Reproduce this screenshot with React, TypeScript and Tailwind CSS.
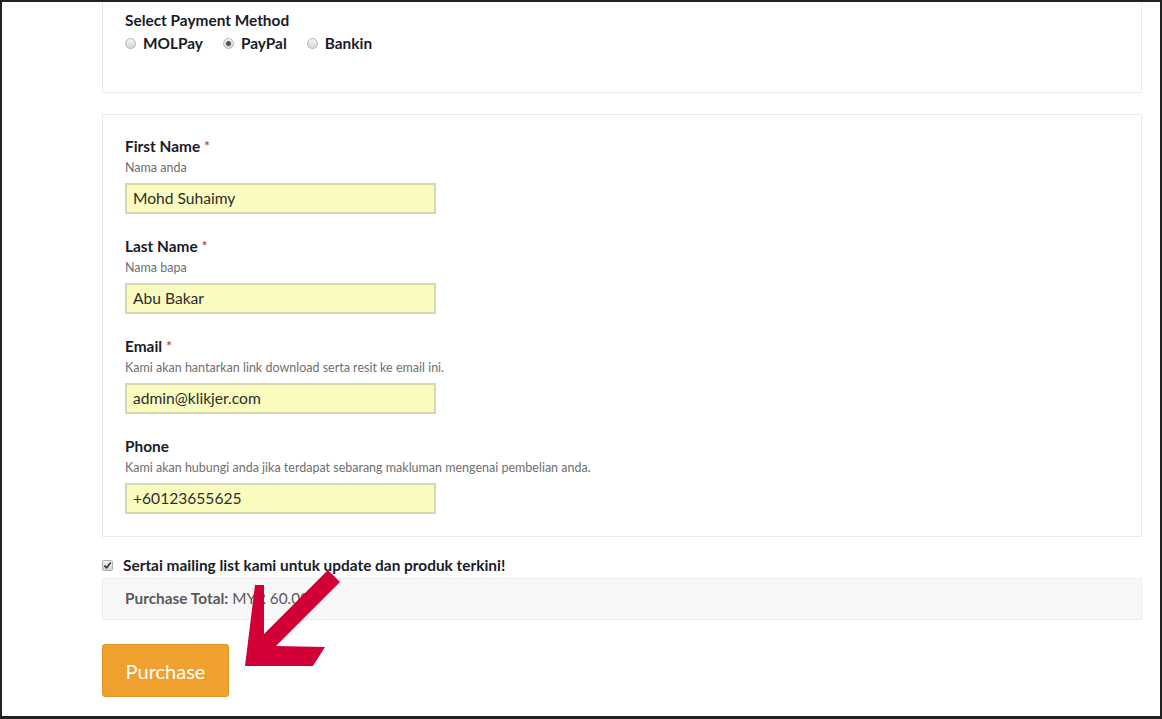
import React from 'react';

const fields = [
  { label: 'First Name', required: true, help: 'Nama anda', value: 'Mohd Suhaimy' },
  { label: 'Last Name', required: true, help: 'Nama bapa', value: 'Abu Bakar' },
  { label: 'Email', required: true, help: 'Kami akan hantarkan link download serta resit ke email ini.', value: 'admin@klikjer.com' },
  { label: 'Phone', required: false, help: 'Kami akan hubungi anda jika terdapat sebarang makluman mengenai pembelian anda.', value: '+60123655625' },
];

const Radio: React.FC<{ checked?: boolean; label: string }> = ({ checked, label }) => (
  <label className="flex items-center gap-[7px] mr-[20px]">
    <span className="w-[11px] h-[11px] rounded-full border border-[#b5b5b5] bg-gradient-to-b from-[#f4f4f4] to-[#d6d6d6] flex items-center justify-center">
      {checked && <span className="w-[5px] h-[5px] rounded-full bg-[#555]"></span>}
    </span>
    <span className="font-bold text-[15.4px] text-[#1b1b28]">{label}</span>
  </label>
);

const App: React.FC = () => {
  return (
    <div
      className="w-[1162px] h-[719px] border-x-2 border-t-2 border-b-[3px] border-[#222] bg-white overflow-hidden relative"
      style={{ fontFamily: 'Lato, "Open Sans", sans-serif' }}
    >
      <div className="ml-[100px] w-[1040px]">
        <div className="border-x border-b border-[#eaeaea] px-[22px] pt-[8px] h-[91px]">
          <div className="font-bold text-[15.4px] leading-[20px] text-[#1b1b28]">Select Payment Method</div>
          <div className="flex items-center mt-[3px] leading-[20px]">
            <Radio label="MOLPay" />
            <Radio label="PayPal" checked />
            <Radio label="Bankin" />
          </div>
        </div>

        <div className="mt-[21px] border border-[#eaeaea] px-[22px] pt-[21px] pb-[22px] flex flex-col gap-[22px]">
          {fields.map((f) => (
            <div key={f.label}>
              <div className="font-bold text-[15.4px] leading-[20px] text-[#1b1b28]">
                {f.label}
                {f.required && <span className="text-[#b94a48] text-[13px] ml-[4px] align-top">*</span>}
              </div>
              <div className="text-[12.5px] leading-[16px] text-[#6f6f6f] mt-[4px]">{f.help}</div>
              <div className="mt-[7px] w-[311px] h-[31px] bg-[#fafcbf] border-2 border-[#d8d6ac] px-[6px] flex items-center text-[15.6px] text-[#2d2d2d]">
                {f.value}
              </div>
            </div>
          ))}
        </div>

        <div className="mt-[18px] flex items-center leading-[20px]">
          <span className="w-[11px] h-[11px] rounded-[2px] border border-[#b0b0b0] bg-gradient-to-b from-[#f2f2f2] to-[#d4d4d4] flex items-center justify-center">
            <svg width="9" height="9" viewBox="0 0 10 10">
              <path d="M1.5 5.2 L4 7.6 L8.6 1.8" fill="none" stroke="#333" strokeWidth="1.8" />
            </svg>
          </span>
          <span className="ml-[10px] font-bold text-[15.4px] text-[#1b1b28]">Sertai mailing list kami untuk update dan produk terkini!</span>
        </div>

        <div className="mt-[3px] h-[42px] bg-[#f8f8f8] border border-[#ececec] px-[22px] flex items-center text-[15.4px] text-[#5a5a5a]">
          <span className="font-bold">Purchase Total:</span>
          <span className="ml-[4px]">MYR 60.00</span>
        </div>

        <button className="mt-[24px] w-[127px] h-[53px] bg-[#efa02e] border border-[#e09525] rounded-[3px] text-white text-[20px]">
          Purchase
        </button>
      </div>

      <svg className="absolute left-0 top-0 pointer-events-none" width="1162" height="719" viewBox="0 0 1162 719">
        <polygon
          points="245,666 255,585 264,585 264,634 328,570 340,582 276,646 325,647 313,666"
          transform="translate(-2,-2)"
          fill="#d10037"
        />
      </svg>
    </div>
  );
};

export default App;
